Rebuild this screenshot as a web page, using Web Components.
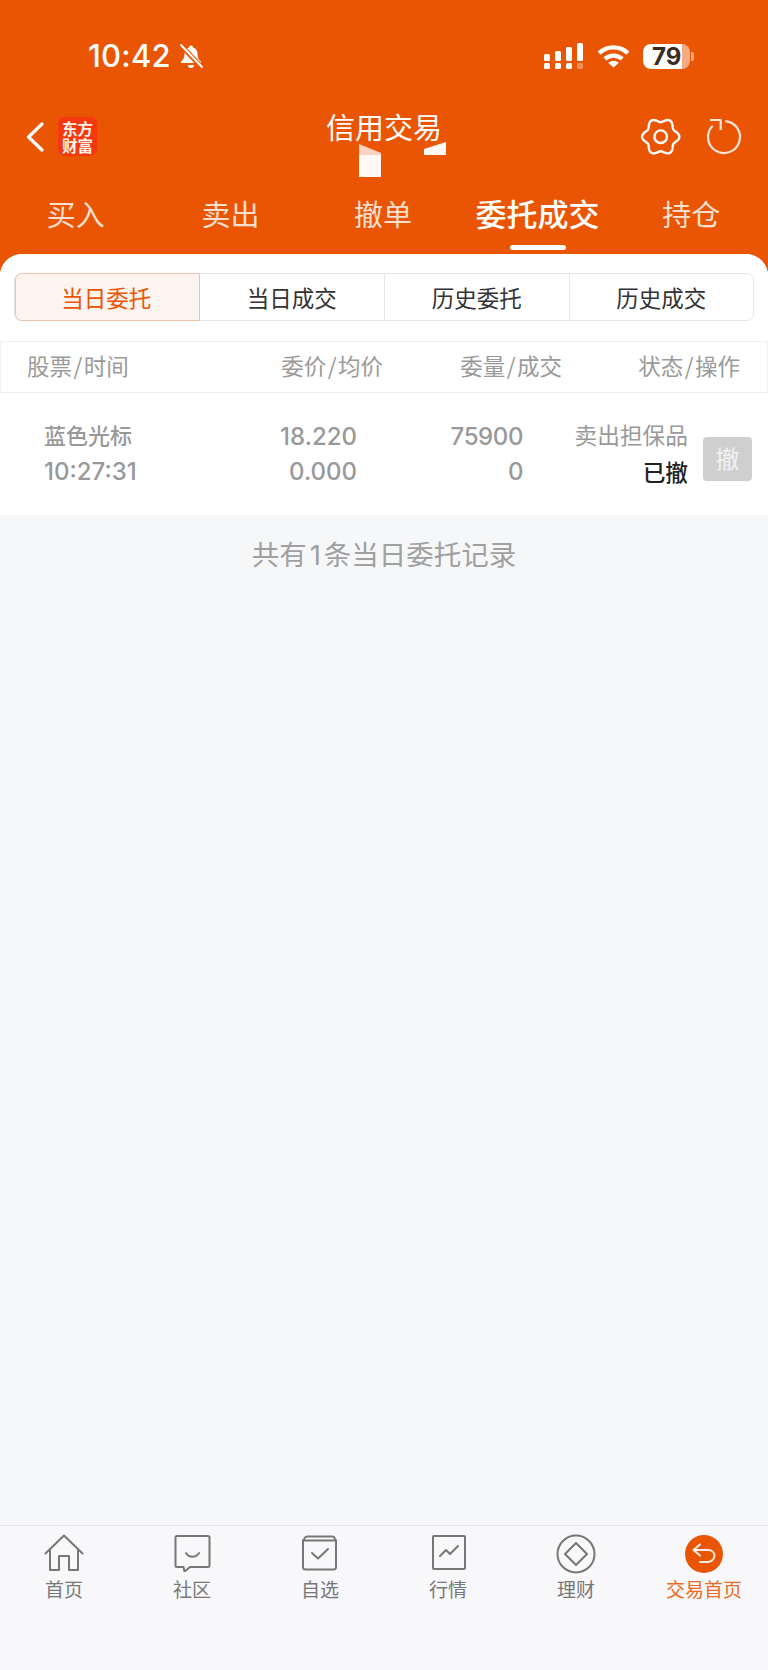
<!DOCTYPE html>
<html lang="zh"><head><meta charset="utf-8"><style>
html,body{margin:0;padding:0}
body{width:768px;height:1670px;overflow:hidden;background:#f6f7f9;font-family:"Liberation Sans","Noto Sans CJK SC",sans-serif}
app-shell{height:1670px}
</style></head><body>
<app-shell>
  <status-bar></status-bar>
  <nav-header title="信用交易"></nav-header>
  <main-tabs></main-tabs>
  <order-panel></order-panel>
  <bottom-nav></bottom-nav>
</app-shell>
<script>
const CJK='"Noto Sans CJK SC",sans-serif';
function def(name,html){customElements.define(name,class extends HTMLElement{constructor(){super();this.attachShadow({mode:'open'}).innerHTML=typeof html==='function'?html(this):html}})}
function gearPath(cx,cy){let d='';for(let i=0;i<=240;i++){const a=i/240*2*Math.PI,r=16.6+2*Math.cos(6*a);d+=(i?'L':'M')+(cx+r*Math.cos(a)).toFixed(2)+' '+(cy+r*Math.sin(a)).toFixed(2)}return d+'Z'}
def('app-shell',`<style>:host{display:flex;flex-direction:column;width:768px;background:#f6f7f9}</style><slot></slot>`);
def('status-bar',`<style>
:host{display:flex;align-items:center;box-sizing:border-box;height:108px;background:#ea5504;color:#fff;padding:4px 0 0 88px}
.t{font:500 31px/30px Inter,sans-serif;letter-spacing:.2px;width:91px}
.r{margin-left:341px;display:flex;align-items:center}
.bat{width:47px;height:25px;border-radius:8px;background:linear-gradient(90deg,#fff 0 39px,rgba(255,255,255,.5) 39px);font:700 24px/25px Inter,sans-serif;color:#3a2a22;box-sizing:border-box;padding-left:9px}
svg{display:block}
</style>
<span class="t">10:42</span>
<svg width="24" height="26" viewBox="1 0 24 26"><path d="M13 2.500c-1.200 0-2 .8-2.100 2-3 .9-4.400 3.500-4.400 6.500 0 3.500-1 5.500-3.500 7.500v1.500h20v-1.500c-2.500-2-3.500-4-3.500-7.500 0-3-1.400-5.600-4.400-6.500-.1-1.200-.9-2-2.100-2z" fill="#fff"/><path d="M10 22h6a3 3 0 0 1-6 0z" fill="#fff"/><path d="M2 1.500 24.500 25" stroke="#ea5504" stroke-width="5"/><path d="M2.500 1.500 24.500 24.500" stroke="#fff" stroke-width="2"/></svg>
<div class="r">
<svg width="39" height="26" viewBox="0 0 39 26" fill="#fff"><rect x="0" y="11" width="6" height="7" rx="1.500"/><rect x="11" y="8" width="6" height="10" rx="1.500"/><rect x="22" y="4" width="6" height="14" rx="1.500"/><rect x="33" y="0" width="6" height="18" rx="1.500"/><rect x="0" y="20" width="6" height="6" rx="1.500"/><rect x="11" y="20" width="6" height="6" rx="1.500"/><rect x="22" y="20" width="6" height="6" rx="1.500"/><rect x="33" y="20" width="6" height="6" rx="1.500" opacity=".35"/></svg>
<svg width="33" height="24" viewBox="0 0 34 25" style="margin-left:14px" fill="none" stroke="#fff" stroke-width="4.500"><path d="M2 9.500c8.500-8 21.500-8 30 0"/><path d="M8 15.500c5-4.500 13-4.500 18 0"/><path d="M17 24.500 11.500 19.500c3-2.500 8-2.500 11 0z" fill="#fff" stroke="none"/></svg>
<div style="display:flex;align-items:center;margin-left:13px"><div class="bat">79</div><div style="width:3px;height:9px;background:rgba(255,255,255,.5);border-radius:0 2px 2px 0;margin-left:1px"></div></div>
</div>`);
def('nav-header',el=>`<style>
:host{display:flex;align-items:flex-start;position:relative;box-sizing:border-box;height:76px;background:#ea5504;color:#fff}
.back{margin:14px 0 0 26px;display:block}
.logo{margin:9px 0 0 14px;width:39px;height:39px;border-radius:7px;background:#f5380f;font:700 15.500px/16.500px "Noto Sans CJK SC",sans-serif;text-align:center;box-sizing:border-box;padding:3px 2px 0;color:#fff6ec}
.title{position:absolute;left:0;right:0;top:1px;text-align:center;font:400 29px/34px ${CJK}}
.gear{position:absolute;left:640px;top:9px}
.re{position:absolute;left:704px;top:8px}
.a{position:absolute;left:359px;top:36px}.b{position:absolute;left:424px;top:34px}
</style>
<svg class="back" width="18" height="30" viewBox="0 0 18 30" fill="none" stroke="#fff" stroke-width="3.200" stroke-linecap="round" stroke-linejoin="round"><path d="M16 2 2.500 15 16 28"/></svg>
<div class="logo">东方财富</div>
<div class="title">${el.getAttribute('title')}</div>
<svg class="a" width="23" height="33" viewBox="0 0 23 33"><path d="M0 0 22 9V33H0z" fill="#fff" fill-opacity=".96"/><path d="M0 0 22 9V11H0z" fill="#ea5504" fill-opacity=".22"/></svg>
<svg class="b" width="23" height="14" viewBox="0 0 23 14"><path d="M0 7 22 0V13H0z" fill="#fff" fill-opacity=".96"/></svg>
<svg class="gear" width="42" height="40" viewBox="0 0 42 40" fill="none" stroke="#fff" stroke-width="2.400" stroke-linejoin="round"><path d="${gearPath(20.7,19.7)}"/><circle cx="20.700" cy="19.700" r="6.300"/></svg>
<svg class="re" width="40" height="40" viewBox="0 0 40 40" fill="none" stroke="#fff" stroke-opacity=".85" stroke-width="2.200"><path d="M21.300 5.100A16 16 0 1 1 8.700 9.700"/><path d="M6 4H16.700V14" stroke-linejoin="round"/></svg>`);
def('main-tabs',`<style>
:host{display:grid;grid-template-columns:repeat(5,1fr);box-sizing:border-box;height:70px;background:#ea5504;color:rgba(255,255,255,.82);text-align:center;font:400 29px/34px ${CJK}}
div{padding-top:12px;position:relative}
.s{padding-right:2px}
.on{color:#fff;font-weight:500;font-size:31px}
.on::after{content:"";position:absolute;left:50%;top:61px;width:56px;height:5px;margin-left:-28px;border-radius:3px;background:#fff}
</style><div class="s">买入</div><div>卖出</div><div class="s">撤单</div><div class="on">委托成交</div><div>持仓</div>`);
def('order-panel',`<style>
:host{display:block;flex:1;min-height:0;background:#ea5504;font:400 22px/32px ${CJK}}
.wrap{height:100%;background:#f6f7f9;border-radius:22px 22px 0 0;overflow:hidden}
.top{background:#fff;padding:19px 14px 20px;}
.seg{display:grid;grid-template-columns:repeat(4,1fr);height:48px;border:1px solid #e4e6ea;border-radius:7px;box-sizing:border-box;color:#333;text-align:center;line-height:46px;width:740px;font-size:22.500px}
.seg div{border-left:1px solid #e4e6ea}
.seg div:first-child{border:1.500px solid #edc3ae;background:#fdf4ef;color:#ea5504;border-radius:7px 0 0 7px;margin:-1px 0;padding-right:2px;line-height:46px}
.seg div:nth-child(2){border-left:0}
.head{display:grid;grid-template-columns:1fr 179px 179px 178px;height:52px;box-sizing:border-box;background:#fff;border:1px solid #efefef;padding:0 27px 0 26px;color:#9a9a9a;line-height:46px;text-align:right;font-size:22.500px}
.head span:first-child{text-align:left}
.head i{font-style:normal;margin:0 1.500px}
.row{display:flex;align-items:center;height:122px;box-sizing:border-box;background:#fff;padding:0 16px 0 44px;color:#999;font-weight:500}
.c{display:flex;flex-direction:column;text-align:right;line-height:35px}
.n{font-family:Inter,sans-serif;font-size:24px;font-weight:500}
.c1{text-align:left;width:148px}
.c1 span:first-child,.c4 span{margin:-2px 0 2px}
.c2{width:165px}.c3{width:166px;letter-spacing:-.4px}.c4{width:165px;font-weight:400;font-size:22.700px}
.c4 b{color:#222;font-weight:500}
.btn{width:49px;height:44px;margin-left:15px;margin-top:9px;border-radius:4px;background:#cfcfcf;color:#f2f2f2;font-size:24px;font-weight:400;line-height:42px;text-align:center}
.total{text-align:center;color:#a0a0a0;font-size:27.500px;line-height:40px;padding-top:18px}
.total i{font:400 27.500px Inter,sans-serif;margin:0 3px}
</style>
<div class="wrap"><div class="top"><div class="seg"><div>当日委托</div><div>当日成交</div><div>历史委托</div><div>历史成交</div></div></div>
<div class="head"><span>股票<i>/</i>时间</span><span>委价<i>/</i>均价</span><span>委量<i>/</i>成交</span><span>状态<i>/</i>操作</span></div>
<div class="row"><div class="c c1"><span>蓝色光标</span><span class="n">10:27:31</span></div><div class="c c2 n"><span>18.220</span><span>0.000</span></div><div class="c c3 n"><span>75900</span><span>0</span></div><div class="c c4"><span>卖出担保品</span><b>已撤</b></div><div class="btn">撤</div></div>
<div class="total">共有<i>1</i>条当日委托记录</div></div>`);
const ic={
home:`<svg viewBox="0 0 40 38"><path d="M1.500 19.500 20 1.500l18.500 18M6 16.500V36h9V22h10v14h9V16.500"/></svg>`,
talk:`<svg viewBox="0 0 40 38"><path d="M5 2h31a1.500 1.500 0 0 1 1.500 1.500v28a1.500 1.500 0 0 1-1.500 1.500H18l-5.500 4.500-1-4.500H5a1.500 1.500 0 0 1-1.500-1.500v-28A1.500 1.500 0 0 1 5 2z"/><path d="M14 19c3 5 10 5 13 0"/></svg>`,
star:`<svg viewBox="0 0 40 38"><path d="M7 2.500h25.500a2.500 2.500 0 0 1 2.300 1.800L36 7v26a2.500 2.500 0 0 1-2.500 2.500h-28A2.500 2.500 0 0 1 3 33V7l1.700-2.700A2.500 2.500 0 0 1 7 2.500z"/><path d="M3 6.500h33"/><path d="M12 19l6 5.500 10-9.500"/></svg>`,
mkt:`<svg viewBox="0 0 40 38"><rect x="5" y="2" width="32" height="33" rx="1"/><path d="M12 22l6-6 4 4 8-8"/></svg>`,
fin:`<svg viewBox="0 0 40 40" style="height:40px"><circle cx="20" cy="20" r="18.500"/><path d="M20 9 31 20 20 31 9 20z"/></svg>`
};
def('nav-item',el=>`<style>
:host{display:flex;flex-direction:column;align-items:center;color:#777;font:400 19px/28px ${CJK}}
.i{width:40px;height:40px;margin-bottom:1px}
svg{display:block;width:40px;height:38px;fill:none;stroke:#777;stroke-width:2;stroke-linejoin:round;stroke-linecap:round}
</style><div class="i">${ic[el.getAttribute('icon')]}</div><span>${el.getAttribute('label')}</span>`);
def('bottom-nav',`<style>
:host{display:grid;grid-template-columns:repeat(6,1fr);box-sizing:border-box;height:145px;flex:none;background:#f8f8fa;border-top:1px solid #e3e3e3;padding-top:8px}
.home{display:flex;flex-direction:column;align-items:center;color:#ea6a22;font:400 19px/28px ${CJK}}
svg{display:block;margin-bottom:1px}
</style>
<nav-item icon="home" label="首页"></nav-item><nav-item icon="talk" label="社区"></nav-item><nav-item icon="star" label="自选"></nav-item><nav-item icon="mkt" label="行情"></nav-item><nav-item icon="fin" label="理财"></nav-item>
<div class="home"><svg width="40" height="40" viewBox="0 0 40 40"><circle cx="20" cy="20" r="19" fill="#ea5504"/><path d="M16 10.500 9.500 16l6.500 5.500M10 16h14c4 0 6.500 2.500 6.500 5.500S28 28 24 28h-8" fill="none" stroke="#fff" stroke-width="2" stroke-linecap="round" stroke-linejoin="round" opacity=".9"/></svg><span>交易首页</span></div>`);
</script>
</body></html>
